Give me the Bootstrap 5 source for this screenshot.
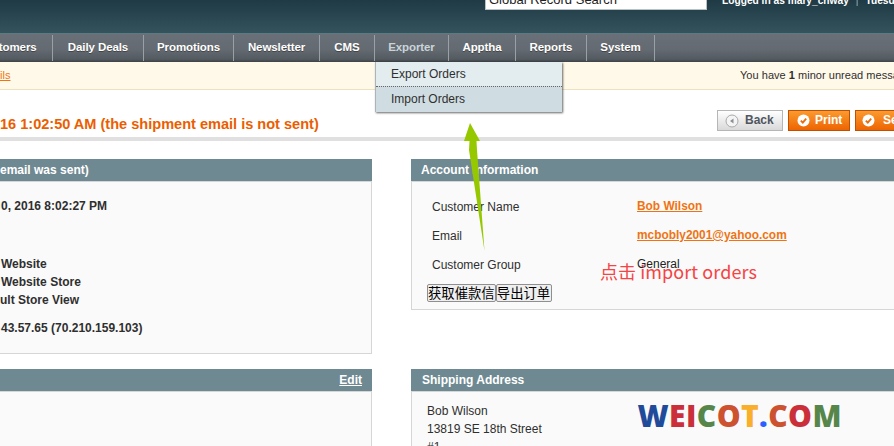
<!DOCTYPE html>
<html lang="en">
<head>
<meta charset="utf-8">
<title>Order</title>
<link href="https://cdn.jsdelivr.net/npm/bootstrap@5.3.0/dist/css/bootstrap.min.css" rel="stylesheet">
<style>
html,body{margin:0;height:446px;overflow:hidden;background:#fff}
body{font-family:"Liberation Sans",Arial,sans-serif;font-size:12px;line-height:18px;color:#2f2f2f}
.stage{position:relative;width:894px;height:446px;overflow:hidden}
.topbar{height:34px;background:linear-gradient(#1f3a45,#34535d);border-bottom:1px solid #5b7a82;align-items:flex-start;padding-left:485px;color:#fff;white-space:nowrap;position:relative}
.topbar::after{content:"";position:absolute;left:0;right:0;bottom:-2px;height:1px;background:#373f44}
.searchbox{width:217px;height:9px;background:#fff;border:1px solid #b8c2c6;border-top:0;color:#222;font-size:13px;line-height:9px;padding-left:3px;overflow:hidden;box-sizing:content-box;flex:none}
.searchbox span{display:block;margin-top:-6px;line-height:12px}
.who{margin-left:15px;line-height:2px;font-weight:700;font-size:10.2px;height:8px;flex:none}
.who i{font-style:normal;font-weight:400;margin:0 7px;color:#9fb2b8}
.mainnav{height:28px;padding-top:1px;background:linear-gradient(#6a7077 0,#646a71 55%,#535a60 90%,#3d4247 100%);position:relative;white-space:nowrap}
.navrow{height:26px}
.navitem{color:#fff;font-weight:700;font-size:11.5px;letter-spacing:-.1px;line-height:25px;text-align:center;padding:0;border-right:1px solid #9aa1a6;height:26px;position:relative;text-decoration:none;text-shadow:0 1px 0 #444;flex:none}
.w-cust{width:111px;margin-left:-58px;padding-left:20px}
.w-daily{width:91px}
.w-promo{width:90px}
.w-news{width:86px}
.w-cms{width:55px}
.w-exp{width:74px}
.w-app{width:67px}
.w-rep{width:71px}
.w-sys{width:68px}
.navitem.is-open{color:#c9d4d9;text-shadow:none}
.flyout{position:absolute;left:375px;top:28px;width:187px;z-index:5;background:#e3ecef;border-left:1px solid #aab4b9;box-shadow:1px 1px 2px rgba(0,0,0,.6);color:#2f2f2f}
.flyitem{height:24px;line-height:25px;padding-left:15px}
.flyitem+.flyitem{height:26px;line-height:25px;background:#cfdde2;border-top:1px dotted #666}
.noticebar{height:28px;background:#fff9e9;border-bottom:1px solid #eee2be;line-height:27px;white-space:nowrap;font-size:11px;letter-spacing:.03px}
.noticebar a{color:#ee7413;width:740px;display:block;flex:none}
.titlerow{height:47px;white-space:nowrap;position:relative}
.ordertitle{color:#eb5e00;font-size:14.55px;font-weight:700;line-height:18px;padding-top:25px;margin:0;width:717px;flex:none}
.actbtn{height:21px;margin-top:20px;margin-right:5px;font-size:12px;font-weight:700;line-height:17px;padding:0 0 0 7px;border:1px solid #bf5000;background:linear-gradient(#fb9a2f,#ed6502);color:#fff;gap:5px;flex:none}
.actbtn.grey{border-color:#b6b6b6;background:linear-gradient(#fff,#d9d9d9);color:#50565f;width:66px;gap:6px}
.actbtn.orange1{width:62px;padding-left:8px}
.actbtn.sendit{gap:8px;padding-left:6px}
.rule{height:4px;background:#e0e0e0;margin-bottom:18px}
.panelrow{gap:39px;margin-bottom:15px;white-space:nowrap}
.leftcol{width:372px;flex:none}
.rightcol{width:600px;flex:none}
.panelhead{height:23px;background:#6f8992;border-bottom:1px solid #d6d6d6;color:#fff;font-weight:700;line-height:21px;padding:1px 10px 0}
.panelhead a{color:#fff;font-weight:700}
.panelhead.shiphead{padding-left:11px}
.panelbody{background:#fafafa;border:1px solid #d6d6d6;border-top:0}
.leftcol .panelbody{border-left:0}
.lefthead{padding-left:0}
.h173{height:172px;padding-top:15px;font-weight:700}
.h128{height:128px;padding:16px 0 0 20px}
.tall{height:100px}
.linegap{margin-bottom:40px}
.linegap2{margin-bottom:10px}
.startx{padding-left:1px}
.kv{height:29px;line-height:18px}
.kvkey{width:205px;flex:none}
.kv a{color:#ee7413;font-weight:700;margin-top:-1px;font-size:11.9px}
.kv b{font-weight:400;color:#222;margin-top:-1px}
.oldbtns{margin:-1px 0 0 -5px}
.oldbtn{font:13.33px/16px "Noto Sans CJK SC",sans-serif;height:18px;padding:0;width:68.5px;border:1px solid #8f8f8f;border-radius:2px;background:#efefef;color:#000}
.oldbtn+.oldbtn{width:56px}
.shipbody{padding:10px 0 0 15px;height:70px}
.note{position:absolute;left:600px;top:259px;color:#f54444;font:400 18px/24px "Noto Sans CJK SC","Noto Sans",sans-serif;letter-spacing:.08px;white-space:nowrap}
.brand{position:absolute;left:637.5px;top:396px;font:800 30px/40px "Open Sans",sans-serif;letter-spacing:.4px;white-space:nowrap}
.arrowmark{position:absolute;left:0;top:0;z-index:6}
.c-w{color:#1f4b9a}.c-r{color:#cb2f3a}.c-g{color:#56864a}.c-o{color:#cc5230}.c-y{color:#f9ae2c}.c-d{color:#2b5fff}
</style>
</head>
<body>
<div class="stage">
  <div class="topbar d-flex">
    <div class="searchbox"><span>Global Record Search</span></div>
    <div class="who">Logged in as mary_chway<i>|</i>Tuesd</div>
  </div>
  <nav class="mainnav">
    <div class="navrow d-flex">
      <a class="navitem w-cust">Customers</a>
      <a class="navitem w-daily">Daily Deals</a>
      <a class="navitem w-promo">Promotions</a>
      <a class="navitem w-news">Newsletter</a>
      <a class="navitem w-cms">CMS</a>
      <a class="navitem w-exp is-open">Exporter</a>
      <a class="navitem w-app">Apptha</a>
      <a class="navitem w-rep">Reports</a>
      <a class="navitem w-sys">System</a>
    </div>
    <div class="flyout">
      <div class="flyitem">Export Orders</div>
      <div class="flyitem">Import Orders</div>
    </div>
  </nav>
  <div class="noticebar d-flex">
    <a href="#">ils</a>
    <span>You have <b>1</b> minor unread messages</span>
  </div>
  <div class="titlerow d-flex">
    <h3 class="ordertitle">16 1:02:50 AM (the shipment email is not sent)</h3>
    <button class="actbtn grey d-flex align-items-center" type="button">
      <svg width="14" height="14" viewBox="0 0 14 14"><circle cx="7" cy="7" r="6" fill="#f4f4f4" stroke="#a9a9a9"/><path d="M8.5 4.5v5L5 7z" fill="#8a8f94"/></svg>Back</button>
    <button class="actbtn orange1 d-flex align-items-center" type="button">
      <svg width="13" height="13" viewBox="0 0 13 13"><circle cx="6.5" cy="6.5" r="6" fill="#fff"/><path d="M3.8 6.6l2 2 3.4-4" fill="none" stroke="#ed6b0a" stroke-width="1.8"/></svg>Print</button>
    <button class="actbtn sendit d-flex align-items-center" type="button">
      <svg width="13" height="13" viewBox="0 0 13 13"><circle cx="6.5" cy="6.5" r="6" fill="#fff"/><path d="M3.8 6.6l2 2 3.4-4" fill="none" stroke="#ed6b0a" stroke-width="1.8"/></svg>Send Email</button>
  </div>
  <div class="rule"></div>
  <div class="panelrow d-flex">
    <div class="leftcol">
      <div class="panelhead lefthead">email was sent)</div>
      <div class="panelbody h173">
        <div class="linegap startx">0, 2016 8:02:27 PM</div>
        <div class="startx">Website</div>
        <div class="startx">Website Store</div>
        <div class="linegap2">ult Store View</div>
        <div class="startx">43.57.65 (70.210.159.103)</div>
      </div>
    </div>
    <div class="rightcol">
      <div class="panelhead">Account Information</div>
      <div class="panelbody h128">
        <div class="kv d-flex"><span class="kvkey">Customer Name</span><a href="#">Bob Wilson</a></div>
        <div class="kv d-flex"><span class="kvkey">Email</span><a href="#">mcbobly2001@yahoo.com</a></div>
        <div class="kv d-flex"><span class="kvkey">Customer Group</span><b>General</b></div>
        <div class="oldbtns d-flex"><button class="oldbtn" type="button">获取催款信</button><button class="oldbtn" type="button">导出订单</button></div>
      </div>
    </div>
  </div>
  <div class="panelrow d-flex">
    <div class="leftcol">
      <div class="panelhead d-flex justify-content-end"><a href="#">Edit</a></div>
      <div class="panelbody tall"></div>
    </div>
    <div class="rightcol">
      <div class="panelhead shiphead">Shipping Address</div>
      <div class="panelbody shipbody">Bob Wilson<br>13819 SE 18th Street<br>#1</div>
    </div>
  </div>
  <svg class="arrowmark" width="894" height="446" viewBox="0 0 894 446" aria-hidden="true"><polygon points="470,123 480,141 476.5,141 477,150 484.5,251 469,150 469.5,141 464,141" fill="#96c800"/></svg>
  <div class="note">点击 import orders</div>
  <div class="brand"><span class="c-w">W</span><span class="c-r">EI</span><span class="c-g">C</span><span class="c-o">O</span><span class="c-y">T</span><span class="c-d">.</span><span class="c-o">C</span><span class="c-r">O</span><span class="c-g">M</span></div>
</div>
</body>
</html>
